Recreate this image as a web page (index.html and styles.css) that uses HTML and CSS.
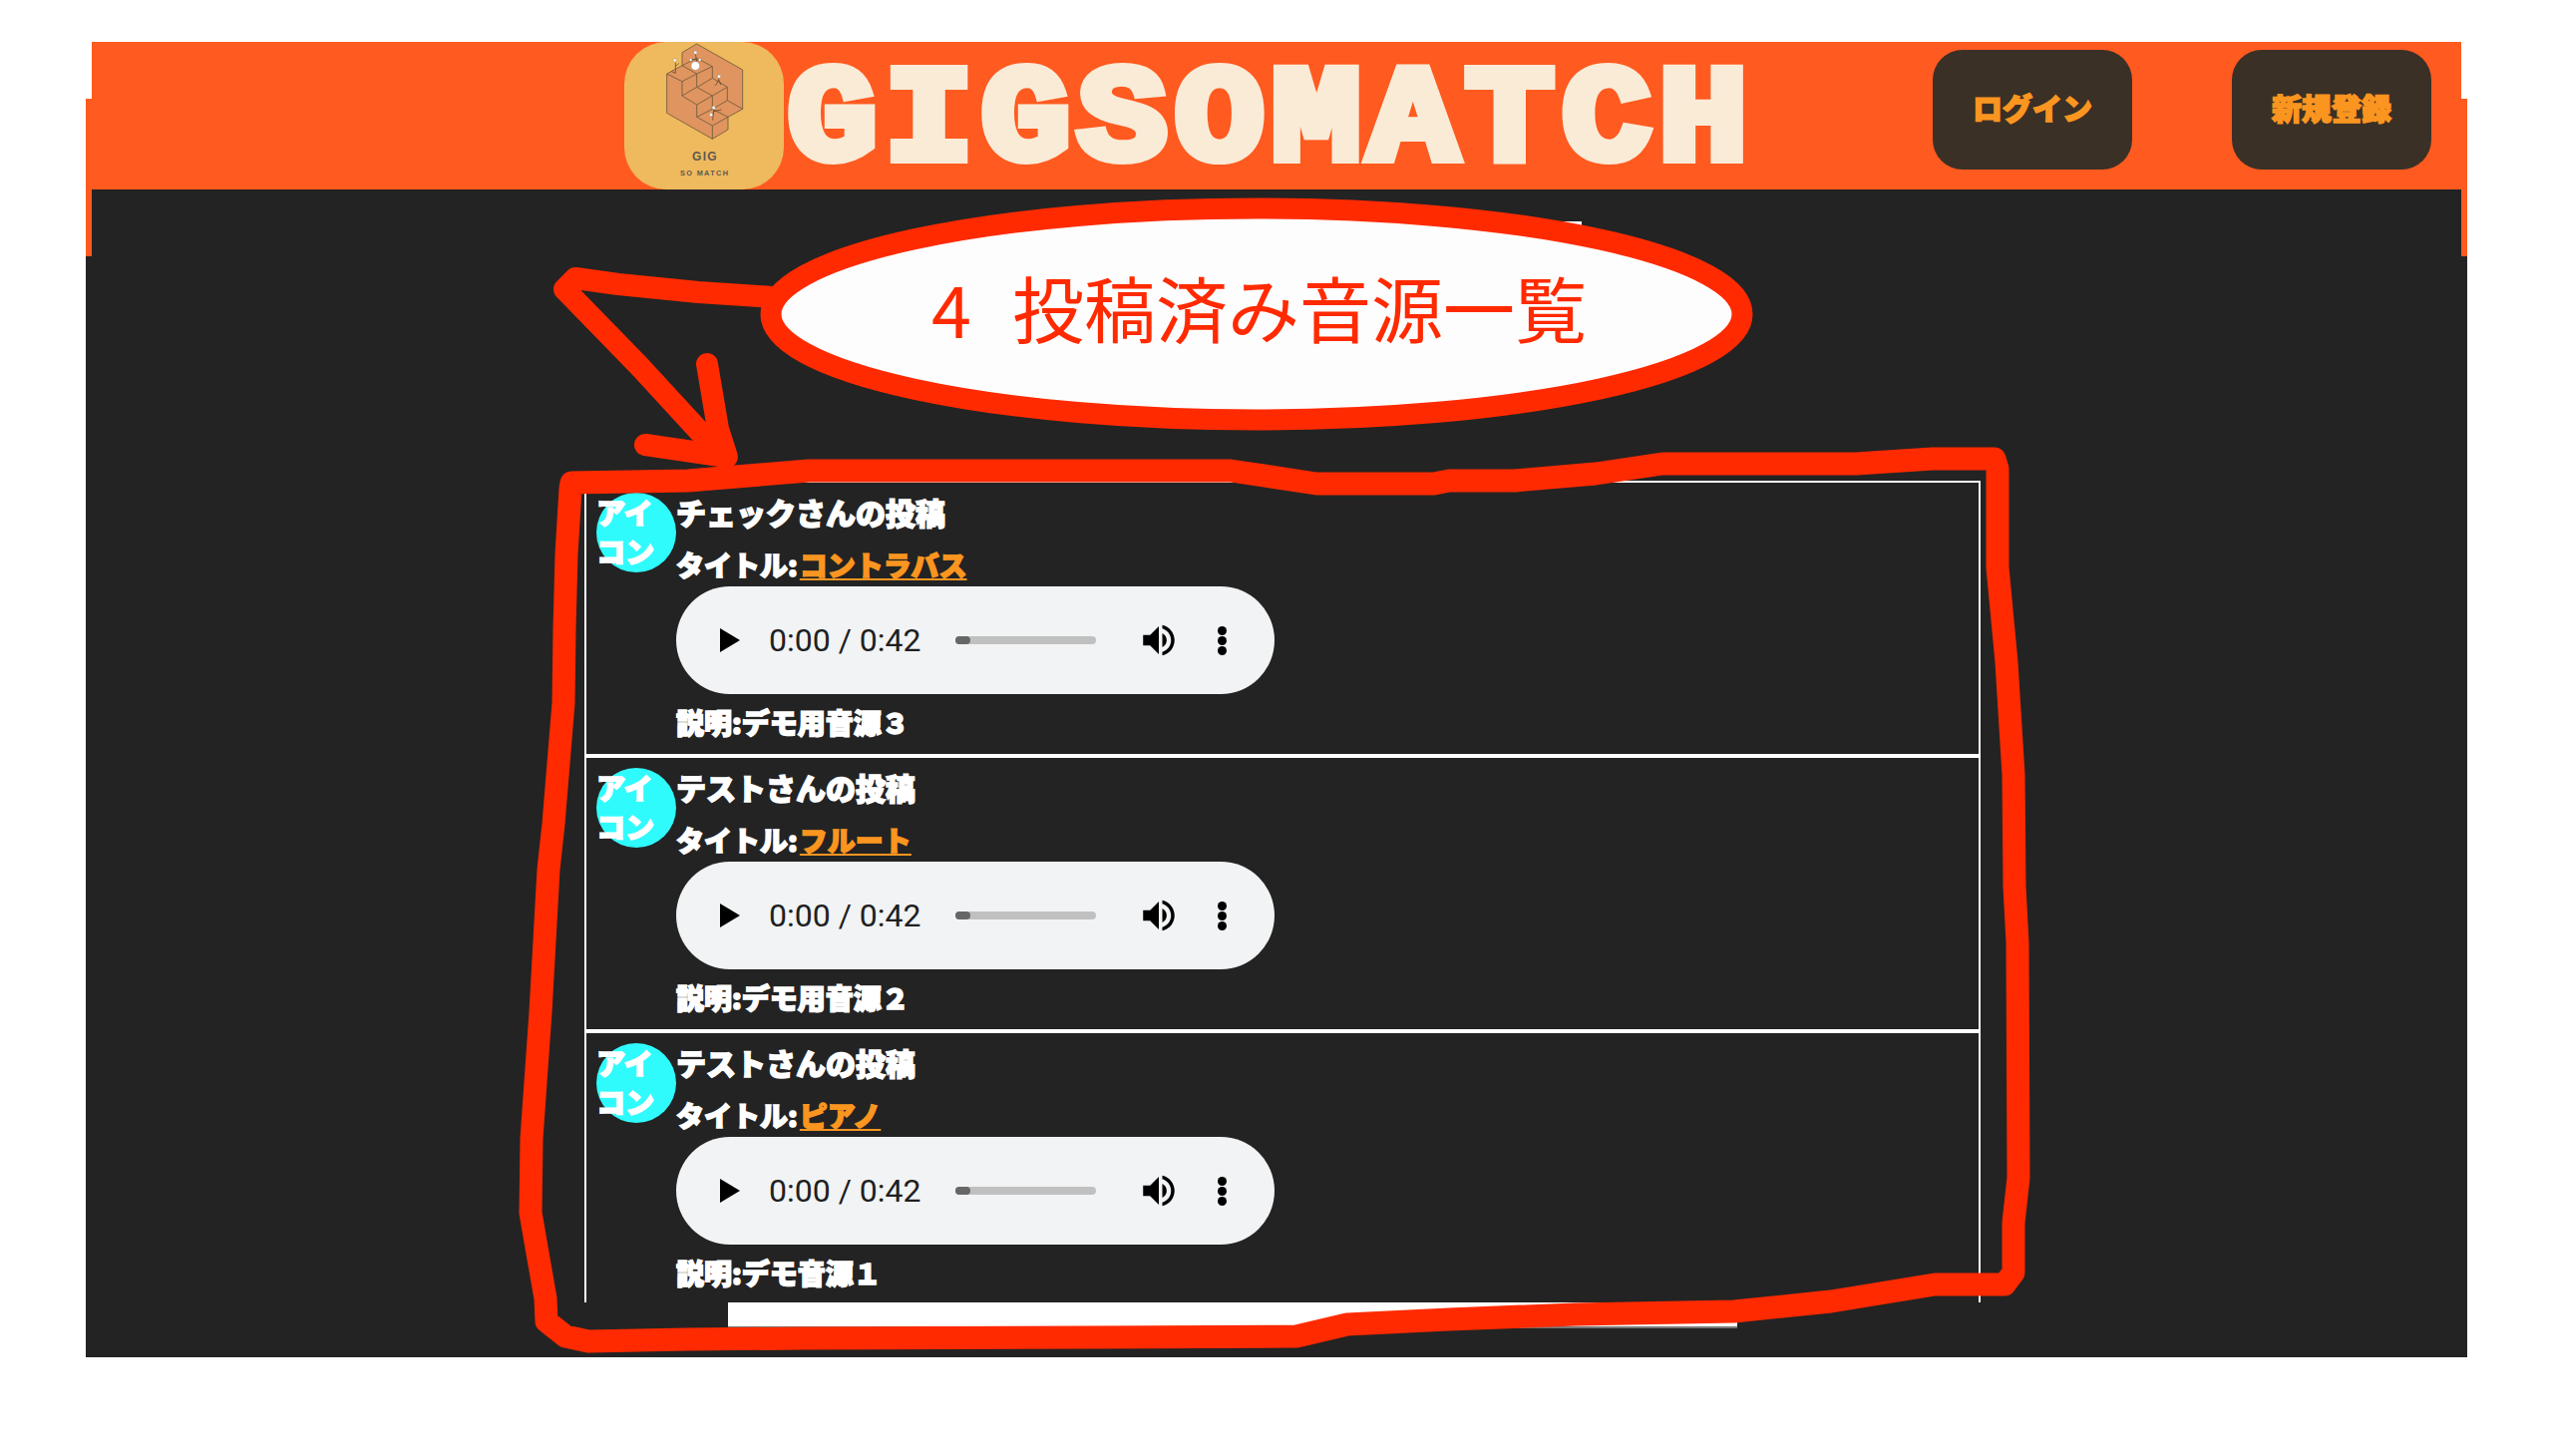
FILE: index.html
```html
<!DOCTYPE html>
<html>
<head>
  <meta charset="utf-8">
  <title>GIGSOMATCH</title>
  <link rel="stylesheet" href="styles.css">
</head>
<body>
  <div id="page">
    <header id="header">
      <svg class="logo" viewBox="18 36 480 444">
        <g class="logo-cube">
          <path class="logo-face" d="M236 42L374 120V238L330 262V300L283 328L146 250V132L192 107V68Z"/>
          <path d="M146 132L192 155L236 132L192 107L236 85L283 110L236 132V172L192 198V155"/>
          <path d="M236 172L283 198L328 172L283 145L238 172M283 110V145M328 172V212L374 238M192 198L236 225L283 198V238M236 225V262L283 238L330 262L283 288L236 262M283 288V328M328 212L283 238"/>
          <path class="logo-thin" d="M172 98L172 130L160 125M172 110L182 100M232 72L236 95M222 88L246 92M303 146L296 162L290 168M303 150L308 165M287 240L284 272M287 245L310 240M287 250L278 255"/>
        </g>
        <circle class="logo-head" cx="170" cy="91" r="5"/>
        <circle class="logo-head" cx="232" cy="68" r="5"/>
        <circle class="logo-head" cx="232" cy="108" r="13"/>
        <circle class="logo-head" cx="218" cy="90" r="4"/>
        <circle class="logo-head" cx="245" cy="90" r="4"/>
        <circle class="logo-head" cx="303" cy="140" r="5"/>
        <circle class="logo-head" cx="287" cy="234" r="5"/>
        <circle class="logo-head" cx="279" cy="255" r="5"/>
        <text class="logo-gig" x="261" y="392">GIG</text>
        <text class="logo-sub" x="260" y="439">SO MATCH</text>
      </svg>
      <div id="site-title">GIGSOMATCH</div>
      <nav id="nav">
        <a class="nav-btn">ログイン</a>
        <a class="nav-btn">新規登録</a>
      </nav>
    </header>
    <main id="main">
      <div id="posts">
        <div class="post">
          <div class="post-icon">アイコン</div>
          <div class="post-body">
            <div class="post-name">チェックさんの投稿</div>
            <div class="post-title">タイトル:<a class="post-link">コントラバス</a></div>
            <div class="player">
              <svg class="play" viewBox="0 0 20 24"><path d="M0 0L20 12L0 24Z"/></svg>
              <span class="time">0:00 / 0:42</span>
              <div class="track"><div class="thumb"></div></div>
              <svg class="volume" viewBox="0 0 24 24"><path d="M3 9v6h4l5 5V4L7 9H3zm13.5 3c0-1.77-1.02-3.29-2.5-4.03v8.05c1.48-.73 2.5-2.25 2.5-4.02zM14 3.23v2.06c2.89.86 5 3.54 5 6.71s-2.11 5.85-5 6.71v2.06c4.01-.91 7-4.49 7-8.77s-2.99-7.86-7-8.77z"/></svg>
              <div class="kebab"><i></i><i></i><i></i></div>
            </div>
            <div class="post-desc">説明:デモ用音源３</div>
          </div>
        </div>
        <div class="post">
          <div class="post-icon">アイコン</div>
          <div class="post-body">
            <div class="post-name">テストさんの投稿</div>
            <div class="post-title">タイトル:<a class="post-link">フルート</a></div>
            <div class="player">
              <svg class="play" viewBox="0 0 20 24"><path d="M0 0L20 12L0 24Z"/></svg>
              <span class="time">0:00 / 0:42</span>
              <div class="track"><div class="thumb"></div></div>
              <svg class="volume" viewBox="0 0 24 24"><path d="M3 9v6h4l5 5V4L7 9H3zm13.5 3c0-1.77-1.02-3.29-2.5-4.03v8.05c1.48-.73 2.5-2.25 2.5-4.02zM14 3.23v2.06c2.89.86 5 3.54 5 6.71s-2.11 5.85-5 6.71v2.06c4.01-.91 7-4.49 7-8.77s-2.99-7.86-7-8.77z"/></svg>
              <div class="kebab"><i></i><i></i><i></i></div>
            </div>
            <div class="post-desc">説明:デモ用音源２</div>
          </div>
        </div>
        <div class="post">
          <div class="post-icon">アイコン</div>
          <div class="post-body">
            <div class="post-name">テストさんの投稿</div>
            <div class="post-title">タイトル:<a class="post-link">ピアノ</a></div>
            <div class="player">
              <svg class="play" viewBox="0 0 20 24"><path d="M0 0L20 12L0 24Z"/></svg>
              <span class="time">0:00 / 0:42</span>
              <div class="track"><div class="thumb"></div></div>
              <svg class="volume" viewBox="0 0 24 24"><path d="M3 9v6h4l5 5V4L7 9H3zm13.5 3c0-1.77-1.02-3.29-2.5-4.03v8.05c1.48-.73 2.5-2.25 2.5-4.02zM14 3.23v2.06c2.89.86 5 3.54 5 6.71s-2.11 5.85-5 6.71v2.06c4.01-.91 7-4.49 7-8.77s-2.99-7.86-7-8.77z"/></svg>
              <div class="kebab"><i></i><i></i><i></i></div>
            </div>
            <div class="post-desc">説明:デモ音源１</div>
          </div>
        </div>
      </div>
      <div id="footer-bar"></div>
    </main>
  </div>

  <!-- red marker notes drawn on top of the page -->
  <svg id="notes" viewBox="0 0 2560 1460">
    <rect class="note-label" x="1040" y="222" width="546" height="90"/>
    <path class="note-line" d="M775 298L700 293L620 285L577 279L566 290L641 367L722 455"/>
    <path class="note-line" d="M709 365L720 430L729 458L647 446"/>
    <ellipse class="note-oval" cx="1260" cy="315" rx="487" ry="106"/>
    <text class="note-text" x="934" y="339">4</text>
    <text class="note-text" x="1015" y="338">投稿済み音源一覧</text>
    <path class="note-line note-box" d="M572 490L573 484L690 482L811 472L1234 472L1320 485L1438 485L1453 482L1519 482L1600 475L1667 465L1861 465L1938 460L2000 460L2003 470L2003 569L2012 664L2019 777L2020 889L2023 945L2024 1181L2019 1226L2019 1276L2010 1288L1940 1288L1836 1305L1739 1315L1580 1318L1453 1323L1351 1328L1300 1340L1100 1341L806 1342L689 1343L590 1345L567 1340L548 1325L547 1302L537 1245L532 1216L533 1142L542 1015L550 872L555 826L565 705L566 631L568 556L572 490"/>
  </svg>
</body>
</html>
```

FILE: styles.css
```css
html, body {
  margin: 0;
  background: #fff;
}
body {
  position: relative;
  width: 2560px;
  height: 1460px;
  overflow: hidden;
  font-family: "Noto Sans CJK JP", sans-serif;
}
#page {
  box-sizing: border-box;
  display: flex;
  flex-direction: column;
  width: 2388px;
  height: 1319px;
  margin: 42px 0 0 86px;
  padding: 0 6px;
  background: linear-gradient(transparent 57px, #ff5a1f 57px, #ff5a1f 215px, #232323 215px);
}

/* header */
#header {
  display: flex;
  align-items: flex-start;
  height: 148px;
  padding: 0 30px 0 534px;
  background: #ff5a1f;
}
.logo {
  flex: none;
  width: 160px;
  height: 148px;
  background: #efb95d;
  border-radius: 42px;
}
.logo-cube path {
  fill: none;
  stroke: #6b5a3c;
  stroke-width: 2.5;
}
.logo-cube .logo-face {
  fill: #e0945f;
}
.logo-cube .logo-thin {
  stroke: #4d3d2c;
  stroke-width: 2;
}
.logo-head {
  fill: #fff;
  stroke: #777;
  stroke-width: 1;
}
.logo-gig,
.logo-sub {
  font-family: "Liberation Sans", sans-serif;
  font-weight: bold;
  fill: #5d5a50;
  text-anchor: middle;
}
.logo-gig {
  font-size: 36px;
  letter-spacing: 4px;
}
.logo-sub {
  font-size: 22px;
  letter-spacing: 4px;
}
#site-title {
  margin: 0 0 0 4px;
  width: 980px;
  height: 148px;
  line-height: 164px;
  font-family: "Liberation Mono", monospace;
  font-size: 135px;
  font-weight: bold;
  letter-spacing: 7.2px;
  color: #faebd7;
  -webkit-text-stroke: 10px #faebd7;
  white-space: nowrap;
  transform: scaleX(1.1);
  transform-origin: left center;
}
#nav {
  display: flex;
  gap: 100px;
  margin: 8px 0 0 auto;
}
.nav-btn {
  display: flex;
  align-items: center;
  justify-content: center;
  width: 200px;
  height: 120px;
  padding-bottom: 6px;
  box-sizing: border-box;
  background: #3a3026;
  border-radius: 30px;
  font-size: 30px;
  font-weight: 900;
  color: #fa9520;
  -webkit-text-stroke: 1.5px #fa9520;
}

/* posted tracks */
#main {
  flex: 1;
  padding: 292px 0 0 494px;
  background: #232323;
}
#posts {
  width: 1400px;
  height: 824px;
  overflow: hidden;
}
.post {
  box-sizing: border-box;
  display: flex;
  height: 276px;
  padding: 10px;
  border: 2px solid #fff;
  color: #fff;
  font-size: 28px;
  font-weight: 900;
  -webkit-text-stroke: 1.5px #fff;
}
.post-icon {
  flex: none;
  width: 80px;
  height: 80px;
  background: #2ffbfd;
  border-radius: 50%;
  font-size: 29px;
  line-height: 39px;
}
.post-name {
  height: 42px;
  line-height: 38px;
  font-size: 30px;
}
.post-title {
  height: 40px;
  margin-top: 12px;
  line-height: 36px;
}
.post-link {
  margin-left: 2px;
  color: #fa9520;
  text-decoration: underline;
  -webkit-text-stroke: 1.5px #fa9520;
}
.player {
  box-sizing: border-box;
  display: flex;
  align-items: center;
  width: 600px;
  height: 108px;
  padding-left: 44px;
  background: #f1f3f4;
  border-radius: 54px;
  color: #1f1f1f;
  -webkit-text-stroke: 0;
}
.play {
  flex: none;
  width: 20px;
  height: 24px;
}
.time {
  width: 187px;
  margin-left: 29px;
  font-family: Roboto, sans-serif;
  font-size: 32px;
  font-weight: 400;
  white-space: nowrap;
}
.track {
  width: 141px;
  height: 8px;
  background: #c0c0c0;
  border-radius: 4px;
}
.thumb {
  width: 15px;
  height: 8px;
  background: #666;
  border-radius: 4px;
}
.volume {
  flex: none;
  width: 42px;
  height: 42px;
  margin-left: 42px;
}
.kebab {
  display: flex;
  flex-direction: column;
  gap: 1px;
  margin-left: 38px;
}
.kebab i {
  width: 9px;
  height: 9px;
  background: #000;
  border-radius: 50%;
}
.post-desc {
  height: 40px;
  margin-top: 10px;
  line-height: 36px;
}
#footer-bar {
  box-sizing: border-box;
  width: 1012px;
  height: 26px;
  margin-left: 144px;
  background: #fff;
  border-bottom: 2px solid #777;
}

/* marker notes */
#notes {
  position: absolute;
  left: 0;
  top: 0;
  width: 2560px;
  height: 1460px;
  pointer-events: none;
}
.note-label {
  fill: #fdfdfd;
}
.note-line {
  fill: none;
  stroke: #ff2a00;
  stroke-width: 22;
  stroke-linecap: round;
  stroke-linejoin: round;
}
.note-box {
  stroke-width: 23;
}
.note-oval {
  fill: #fdfdfd;
  stroke: #ff2a00;
  stroke-width: 21;
}
.note-text {
  font-family: "Noto Sans CJK JP", sans-serif;
  font-size: 72px;
  fill: #ff2a00;
}
```
